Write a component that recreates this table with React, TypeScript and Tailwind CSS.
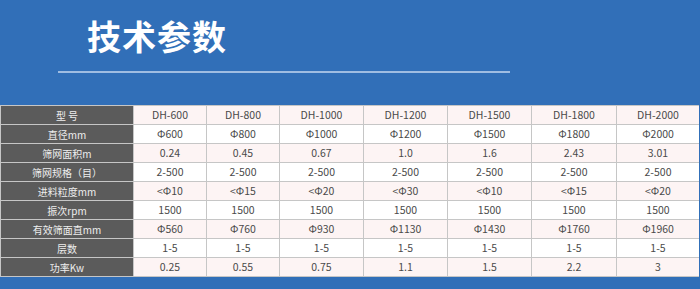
const models = ["DH-600", "DH-800", "DH-1000", "DH-1200", "DH-1500", "DH-1800", "DH-2000"];

const rows: { label: string; values: string[] }[] = [
  { label: "型 号", values: models },
  { label: "直径mm", values: ["Φ600", "Φ800", "Φ1000", "Φ1200", "Φ1500", "Φ1800", "Φ2000"] },
  { label: "筛网面积m", values: ["0.24", "0.45", "0.67", "1.0", "1.6", "2.43", "3.01"] },
  { label: "筛网规格（目）", values: ["2-500", "2-500", "2-500", "2-500", "2-500", "2-500", "2-500"] },
  { label: "进料粒度mm", values: ["<Φ10", "<Φ15", "<Φ20", "<Φ30", "<Φ10", "<Φ15", "<Φ20"] },
  { label: "振次rpm", values: ["1500", "1500", "1500", "1500", "1500", "1500", "1500"] },
  { label: "有效筛面直mm", values: ["Φ560", "Φ760", "Φ930", "Φ1130", "Φ1430", "Φ1760", "Φ1960"] },
  { label: "层数", values: ["1-5", "1-5", "1-5", "1-5", "1-5", "1-5", "1-5"] },
  { label: "功率Kw", values: ["0.25", "0.55", "0.75", "1.1", "1.5", "2.2", "3"] },
];

export default function App() {
  return (
    <div
      className="h-[289px] w-[700px] overflow-hidden bg-[#316fb8]"
      style={{ fontFamily: '"Noto Sans CJK SC", "Noto Sans", sans-serif' }}
    >
      <div className="h-[105px] pt-[19px]">
        <h1 className="pl-[87px] text-[34px] font-bold leading-[34px] tracking-[1px] text-white">技术参数</h1>
        <div className="ml-[58px] mt-[18px] h-[2px] w-[452px] bg-[#9fbde2]" />
      </div>

      <div className="grid w-[699px] grid-cols-[132px_72px_72px_83px_83px_83px_84px_82px] gap-px border border-[#c6c6c6] bg-[#c6c6c6]">
        {rows.map((row, i) => (
          <div key={row.label} className="contents">
            <div className="flex h-[18px] items-center justify-center bg-[#5b5b5b] text-[10px] text-[#eeeeee]">
              {row.label}
            </div>
            {row.values.map((v, j) => (
              <div
                key={j}
                className={
                  "flex h-[18px] items-center justify-center text-[10.5px] text-[#4a4a4a] " +
                  (i % 2 === 0 ? "bg-[#fdf4f4]" : "bg-white")
                }
              >
                {v}
              </div>
            ))}
          </div>
        ))}
      </div>
    </div>
  );
}
